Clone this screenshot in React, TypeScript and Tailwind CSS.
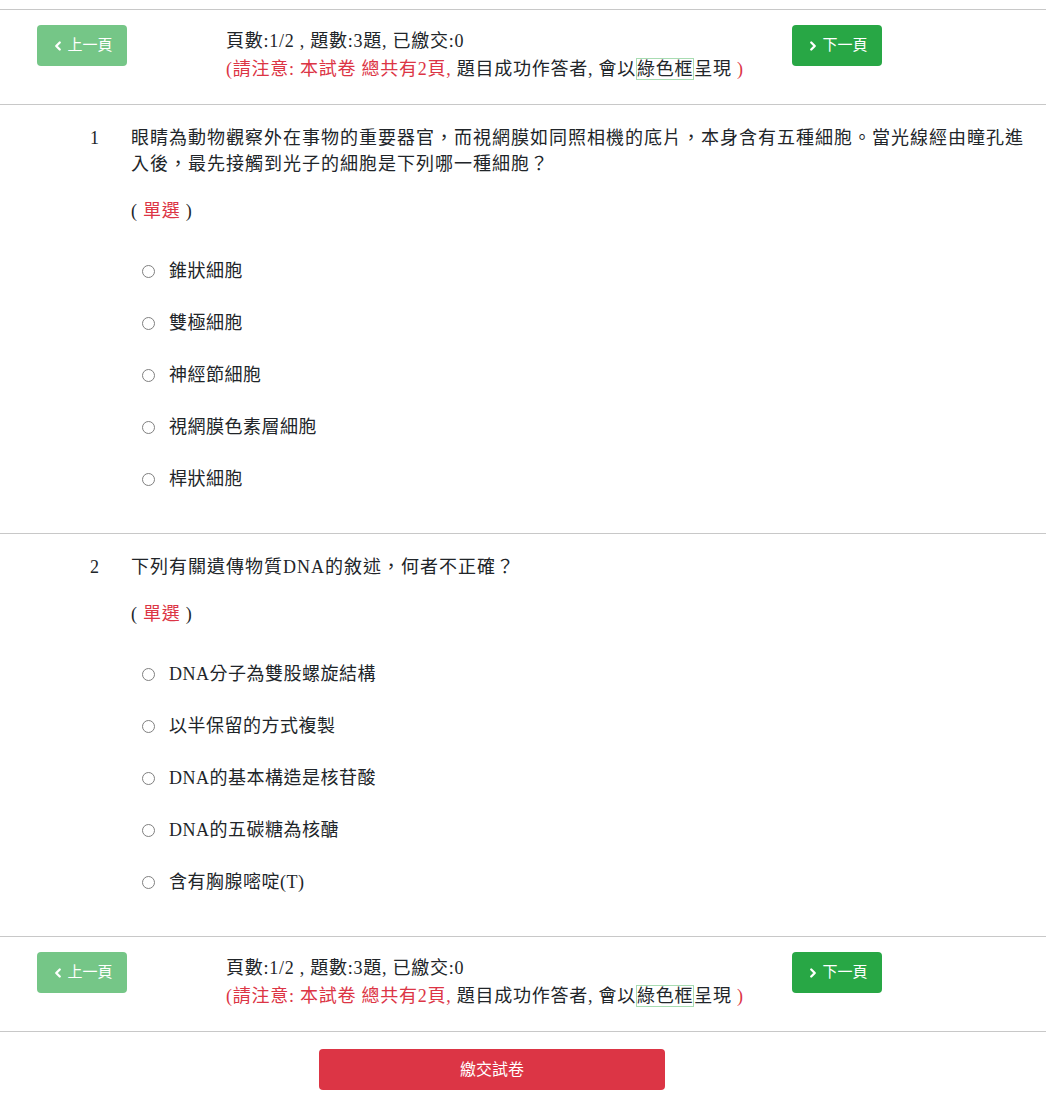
import { ChevronLeft, ChevronRight } from "lucide-react";

const font = {
  fontFamily: '"Liberation Serif", "Noto Sans CJK TC", serif',
};

type Question = {
  no: number;
  text: string;
  options: string[];
};

const questions: Question[] = [
  {
    no: 1,
    text: "眼睛為動物觀察外在事物的重要器官，而視網膜如同照相機的底片，本身含有五種細胞。當光線經由瞳孔進入後，最先接觸到光子的細胞是下列哪一種細胞？",
    options: ["錐狀細胞", "雙極細胞", "神經節細胞", "視網膜色素層細胞", "桿狀細胞"],
  },
  {
    no: 2,
    text: "下列有關遺傳物質DNA的敘述，何者不正確？",
    options: [
      "DNA分子為雙股螺旋結構",
      "以半保留的方式複製",
      "DNA的基本構造是核苷酸",
      "DNA的五碳糖為核醣",
      "含有胸腺嘧啶(T)",
    ],
  },
];

function PageNav() {
  return (
    <div className="flex items-start border-b border-[#c8c8c8] pb-[21px] pt-[15px]">
      <button
        type="button"
        className="ml-[37px] flex h-[41px] w-[90px] items-center justify-center gap-[2px] rounded-[4px] bg-[#75c687] text-[15px] text-white"
      >
        <ChevronLeft className="h-3.5 w-3.5" strokeWidth={4} />
        上一頁
      </button>
      <div className="ml-[99px] w-[566px] pt-[2px] text-[18px] leading-[28px] tracking-[0.75px] text-[#212529]">
        <div>頁數:1/2 , 題數:3題, 已繳交:0</div>
        <div>
          <span className="text-[#dc3545]">(請注意: 本試卷 總共有2頁,</span> 題目成功作答者, 會以
          <span className="border border-[#a8dcb2]">綠色框</span>
          呈現<span className="text-[#dc3545]"> )</span>
        </div>
      </div>
      <button
        type="button"
        className="flex h-[41px] w-[90px] items-center justify-center gap-[2px] rounded-[4px] bg-[#28a745] text-[15px] text-white"
      >
        <ChevronRight className="h-3.5 w-3.5" strokeWidth={4} />
        下一頁
      </button>
    </div>
  );
}

function QuestionBlock({ q, last }: { q: Question; last?: boolean }) {
  return (
    <div className={`pb-[28px] pt-[20px] ${last ? "" : "border-b border-[#c8c8c8]"}`}>
      <div className="flex text-[18px] leading-[26px] tracking-[1px] text-[#212529]">
        <div className="w-[131px] shrink-0 pl-[90px]">{q.no}</div>
        <div className="pr-[20px]">{q.text}</div>
      </div>
      <div className="ml-[131px] mt-[21px] text-[18px] leading-[26px] tracking-[0.75px] text-[#212529]">
        ( <span className="text-[#dc3545]">單選</span> )
      </div>
      <div className="ml-[142px] mt-[21px] flex flex-col">
        {q.options.map((opt) => (
          <label
            key={opt}
            className="flex h-[52px] items-center text-[18px] tracking-[0.5px] text-[#212529]"
          >
            <span className="h-[13px] w-[13px] rounded-full border border-[#808080] bg-white" />
            <span className="ml-[14px]">{opt}</span>
          </label>
        ))}
      </div>
    </div>
  );
}

export default function App() {
  return (
    <div style={font} className="min-h-[1111px] w-[1046px] bg-white">
      <div className="mt-[9px] border-t border-[#c8c8c8]">
        <PageNav />
        {questions.map((q, i) => (
          <QuestionBlock key={q.no} q={q} last={i === questions.length - 1} />
        ))}
        <div className="border-t border-[#c8c8c8]">
          <PageNav />
        </div>
        <div className="flex justify-center pt-[17px]">
          <button
            type="button"
            className="ml-[-62px] h-[41px] w-[346px] rounded-[4px] bg-[#dc3545] text-[16px] text-white"
          >
            繳交試卷
          </button>
        </div>
      </div>
    </div>
  );
}
